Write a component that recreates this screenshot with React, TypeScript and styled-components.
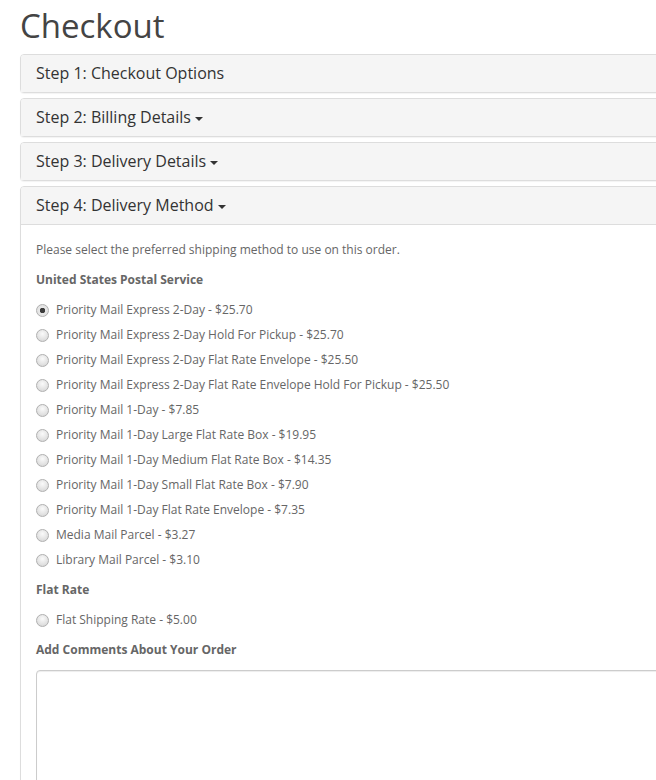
import * as React from "react";
import styled, { createGlobalStyle } from "styled-components";

const GlobalStyle = createGlobalStyle`
  html, body {
    margin: 0;
    padding: 0;
    overflow: hidden;
    background: #fff;
  }
  body {
    font-family: "Open Sans", "Liberation Sans", sans-serif;
    font-size: 12px;
    line-height: 20px;
    color: #666;
  }
  * {
    box-sizing: border-box;
  }
`;

const Page = styled.div`
  width: 720px;
  padding: 8px 0 0 20px;
`;

const Title = styled.h1`
  font-family: "Open Sans", "Liberation Sans", sans-serif;
  font-size: 33px;
  font-weight: 400;
  line-height: 1.1;
  color: #444;
  margin: 0 0 10px;
`;

const PanelGroup = styled.div`
  display: flex;
  flex-direction: column;
  gap: 5px;
`;

const Panel = styled.div`
  border: 1px solid #ddd;
  border-radius: 4px;
  background: #fff;
  box-shadow: 0 1px 1px rgba(0, 0, 0, 0.05);
`;

const PanelHeading = styled.div<{ $open?: boolean }>`
  padding: 10px 15px;
  background: #f5f5f5;
  color: #333;
  border-radius: 3px 3px 0 0;
  border-bottom: ${(p) => (p.$open ? "1px solid #ddd" : "none")};
`;

const PanelTitle = styled.h4`
  margin: 0;
  font-size: 16px;
  font-weight: 400;
  line-height: 17px;
  height: 17px;
  display: flex;
  align-items: center;
  gap: 4px;
`;

const Caret = styled.span`
  display: inline-block;
  width: 0;
  height: 0;
  margin-top: 2px;
  border-top: 4px solid #333;
  border-left: 4px solid transparent;
  border-right: 4px solid transparent;
`;

const PanelBody = styled.div`
  padding: 15px 15px 40px;
`;

const Para = styled.p`
  margin: 0 0 10px;
`;

const Group = styled.p`
  margin: 0 0 10px;
  font-weight: 700;
`;

const RadioRow = styled.label`
  display: block;
  position: relative;
  min-height: 20px;
  padding-left: 20px;
  margin: 10px 0;
  cursor: pointer;
  & + & {
    margin-top: -5px;
  }
`;

const RadioInput = styled.input`
  appearance: none;
  position: absolute;
  left: 0;
  top: 4px;
  width: 13px;
  height: 13px;
  margin: 0;
  border-radius: 50%;
  border: 1px solid #b0b0b0;
  background: radial-gradient(circle at 50% 35%, #fafafa 0%, #e2e2e2 60%, #d0d0d0 100%);
  &:checked {
    background: radial-gradient(circle, #3c3c3c 0 2.5px, #e8e8e8 3px, #dcdcdc 100%);
  }
`;

const Textarea = styled.textarea`
  display: block;
  width: 100%;
  height: 170px;
  padding: 6px 12px;
  border: 1px solid #ccc;
  border-radius: 4px;
  box-shadow: inset 0 1px 1px rgba(0, 0, 0, 0.075);
  font-family: inherit;
  font-size: 12px;
  resize: vertical;
`;

const usps = [
  "Priority Mail Express 2-Day - $25.70",
  "Priority Mail Express 2-Day Hold For Pickup - $25.70",
  "Priority Mail Express 2-Day Flat Rate Envelope - $25.50",
  "Priority Mail Express 2-Day Flat Rate Envelope Hold For Pickup - $25.50",
  "Priority Mail 1-Day - $7.85",
  "Priority Mail 1-Day Large Flat Rate Box - $19.95",
  "Priority Mail 1-Day Medium Flat Rate Box - $14.35",
  "Priority Mail 1-Day Small Flat Rate Box - $7.90",
  "Priority Mail 1-Day Flat Rate Envelope - $7.35",
  "Media Mail Parcel - $3.27",
  "Library Mail Parcel - $3.10",
];

export default function App() {
  const [method, setMethod] = React.useState(usps[0]);

  const radio = (label: string) => (
    <RadioRow key={label}>
      <RadioInput
        type="radio"
        name="shipping_method"
        checked={method === label}
        onChange={() => setMethod(label)}
      />
      {label}
    </RadioRow>
  );

  return (
    <Page>
      <GlobalStyle />
      <Title>Checkout</Title>
      <PanelGroup>
        <Panel>
          <PanelHeading>
            <PanelTitle>Step 1: Checkout Options</PanelTitle>
          </PanelHeading>
        </Panel>
        <Panel>
          <PanelHeading>
            <PanelTitle>
              Step 2: Billing Details <Caret />
            </PanelTitle>
          </PanelHeading>
        </Panel>
        <Panel>
          <PanelHeading>
            <PanelTitle>
              Step 3: Delivery Details <Caret />
            </PanelTitle>
          </PanelHeading>
        </Panel>
        <Panel>
          <PanelHeading $open>
            <PanelTitle>
              Step 4: Delivery Method <Caret />
            </PanelTitle>
          </PanelHeading>
          <PanelBody>
            <Para>Please select the preferred shipping method to use on this order.</Para>
            <Group>United States Postal Service</Group>
            {usps.map(radio)}
            <Group>Flat Rate</Group>
            {radio("Flat Shipping Rate - $5.00")}
            <Group>Add Comments About Your Order</Group>
            <Para>
              <Textarea name="comment" rows={8} />
            </Para>
          </PanelBody>
        </Panel>
      </PanelGroup>
    </Page>
  );
}
